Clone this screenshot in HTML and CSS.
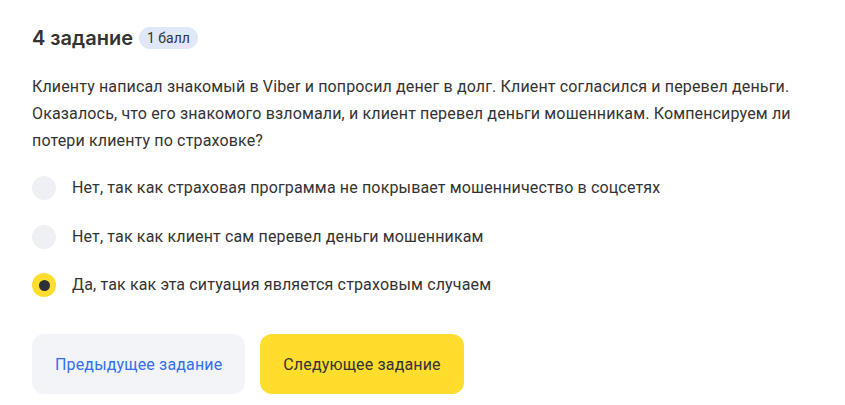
FILE: index.html
```html
<!DOCTYPE html>
<html lang="ru">
<head>
<meta charset="utf-8">
<link rel="stylesheet" href="styles.css">
</head>
<body>
<main class="task">
  <div class="head">
    <h2 class="title">4 задание</h2>
    <span class="badge">1 балл</span>
  </div>
  <p class="question">Клиенту написал знакомый в Viber и попросил денег в долг. Клиент согласился и перевел деньги. Оказалось, что его знакомого взломали, и клиент перевел деньги мошенникам. Компенсируем ли потери клиенту по страховке?</p>
  <ul class="options">
    <li class="option"><span class="radio"></span><span>Нет, так как страховая программа не покрывает мошенничество в соцсетях</span></li>
    <li class="option"><span class="radio"></span><span>Нет, так как клиент сам перевел деньги мошенникам</span></li>
    <li class="option"><span class="radio radio-on"></span><span>Да, так как эта ситуация является страховым случаем</span></li>
  </ul>
  <div class="actions">
    <button class="btn btn-prev">Предыдущее задание</button>
    <button class="btn btn-next">Следующее задание</button>
  </div>
</main>
</body>
</html>
```
FILE: styles.css
```css
* { box-sizing: border-box; }
html, body { margin: 0; background: #fff; }
body {
  font-family: "Roboto", "Inter", sans-serif;
  color: #333333;
  letter-spacing: 0.15px;
}
.task {
  padding: 25px 0 0 32px;
  width: 832px;
}
.head {
  display: flex;
  align-items: center;
  gap: 6px;
  height: 26px;
}
.title {
  margin: 0;
  font-family: "Inter", sans-serif;
  font-size: 20px;
  line-height: 26px;
  font-weight: 600;
  letter-spacing: 0;
  color: #333;
}
.badge {
  background: #dfe7f8;
  color: #333;
  font-size: 14px;
  line-height: 22px;
  padding: 0 8px;
  border-radius: 11px;
  letter-spacing: 0;
}
.question {
  margin: 22px 0 0 0;
  font-size: 16px;
  line-height: 27px;
}
.options {
  list-style: none;
  margin: 22px 0 0 0;
  padding: 0;
  display: flex;
  flex-direction: column;
  gap: 24.5px;
}
.option {
  display: flex;
  align-items: center;
  gap: 16px;
  font-size: 16px;
  line-height: 24px;
}
.radio {
  width: 24px;
  height: 24px;
  border-radius: 50%;
  background: #eef0f4;
  flex: none;
  display: flex;
  align-items: center;
  justify-content: center;
}
.radio-on { background: #ffdd2d; }
.radio-on::after {
  content: "";
  width: 11px;
  height: 11px;
  border-radius: 50%;
  background: #2f2f3a;
}
.actions {
  display: flex;
  gap: 15px;
  margin-top: 37px;
}
.btn {
  border: 0;
  height: 60px;
  padding: 0 23px;
  border-radius: 12px;
  font-family: inherit;
  letter-spacing: inherit;
  font-size: 16px;
}
.btn-prev { background: #f3f4f8; color: #336fee; }
.btn-next { background: #ffdd2d; color: #333; }
```
